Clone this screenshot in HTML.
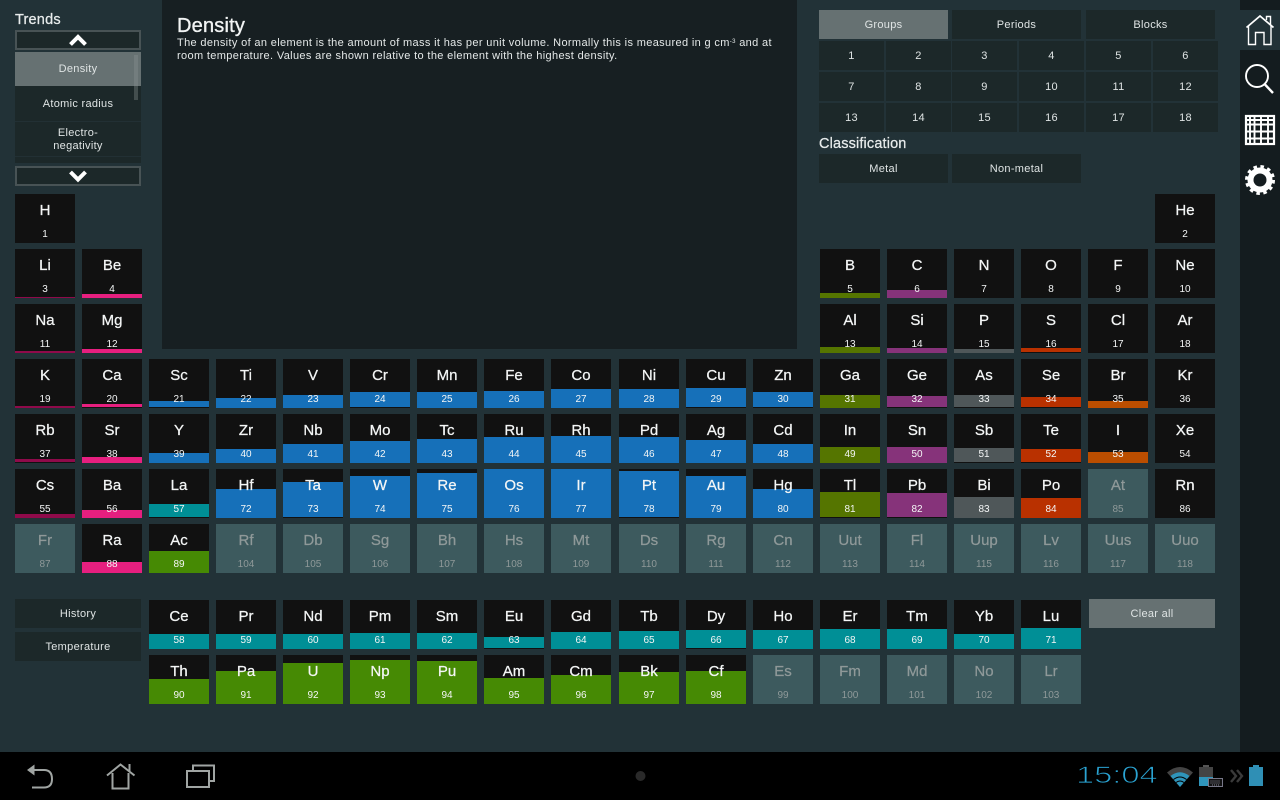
<!DOCTYPE html>
<html><head><meta charset="utf-8"><title>Periodic Table</title>
<style>
html,body{margin:0;padding:0;width:1280px;height:800px;overflow:hidden;background:#000}
#a{position:absolute;left:0;top:0;width:1280px;height:752px;background:#223237;font-family:"Liberation Sans",sans-serif;color:#e8ecec;overflow:hidden}
.c{position:absolute;width:60px;height:49px;background:#111;overflow:hidden;color:#f4f6f6}
.c i{position:absolute;left:0;right:0;bottom:0;display:block}
.c b{position:absolute;left:0;right:0;top:8px;text-align:center;font-weight:normal;font-size:15px;line-height:18px;-webkit-text-stroke:.25px currentColor}
.c u{position:absolute;left:0;right:0;top:35px;text-align:center;text-decoration:none;font-size:10px;line-height:12px}
.d{background:#3d5a5e;color:#8f9999}
.k{background:#8f0a4a}.e{background:#e61f7f}.t{background:#1670b9}.l{background:#008f96}.n{background:#468a04}.o{background:#557500}.p{background:#86337a}.g{background:#4f5759}.r{background:#b93100}.y{background:#bb4e00}
.btn{position:absolute;background:#1c2829;text-align:center;font-size:11px;line-height:30px;color:#dfe4e4;letter-spacing:.3px}
.sel{background:#667172}
.h{position:absolute;font-size:14.5px;line-height:18px;color:#e8ecec;-webkit-text-stroke:.25px currentColor}
svg{position:absolute;overflow:visible}
</style></head><body>
<div id="a">
<div style="position:absolute;left:162px;top:0;width:635px;height:349px;background:#171f22"></div>
<div class="h" style="left:177px;top:14px;font-size:20px;line-height:24px;color:#f2f4f4;letter-spacing:.2px;-webkit-text-stroke:.35px #f2f4f4">Density</div>
<div style="position:absolute;left:177px;top:36px;width:612px;font-size:11px;line-height:13px;color:#e4e8e8;letter-spacing:.35px">The density of an element is the amount of mass it has per unit volume. Normally this is measured in g cm<span style="font-size:6px;vertical-align:3px">-3</span> and at<br>room temperature. Values are shown relative to the element with the highest density.</div>

<div class="h" style="left:15px;top:11px;letter-spacing:.2px">Trends</div>
<div style="position:absolute;left:15px;top:30px;width:122px;height:16px;border:2px solid #485355;background:#1c2829"></div>
<div style="position:absolute;left:15px;top:52px;width:126px;height:111px;background:#1c2829"></div>
<div class="btn sel" style="left:15px;top:52px;width:126px;padding-top:1px;height:33px;line-height:33px">Density</div>
<div class="btn" style="left:15px;top:87px;width:126px;height:33px;padding-top:1px;line-height:33px;border-bottom:1px solid #223034">Atomic radius</div>
<div class="btn" style="left:15px;top:122px;width:126px;height:34px;line-height:13px;border-bottom:1px solid #223034"><div style="padding-top:5px">Electro-<br>negativity</div></div>
<div style="position:absolute;left:134px;top:55px;width:4px;height:45px;background:rgba(140,150,150,.35)"></div>
<div style="position:absolute;left:15px;top:166px;width:122px;height:16px;border:2px solid #485355;background:#1c2829"></div>
<svg style="left:0;top:0;z-index:3" width="1" height="1"><path d="M70.500 44.500L78 37L85.500 44.500" fill="none" stroke="#fff" stroke-width="4"/><path d="M70.500 172L78 179.500L85.500 172" fill="none" stroke="#fff" stroke-width="4"/></svg>

<div class="btn sel" style="left:819px;top:10px;width:129px;height:29px">Groups</div>
<div class="btn" style="left:952px;top:10px;width:129px;height:29px">Periods</div>
<div class="btn" style="left:1086px;top:10px;width:129px;height:29px">Blocks</div>
<div class="btn" style="left:819px;top:41px;width:65px;height:29px">1</div>
<div class="btn" style="left:886px;top:41px;width:65px;height:29px">2</div>
<div class="btn" style="left:952px;top:41px;width:65px;height:29px">3</div>
<div class="btn" style="left:1019px;top:41px;width:65px;height:29px">4</div>
<div class="btn" style="left:1086px;top:41px;width:65px;height:29px">5</div>
<div class="btn" style="left:1153px;top:41px;width:65px;height:29px">6</div>
<div class="btn" style="left:819px;top:72px;width:65px;height:29px">7</div>
<div class="btn" style="left:886px;top:72px;width:65px;height:29px">8</div>
<div class="btn" style="left:952px;top:72px;width:65px;height:29px">9</div>
<div class="btn" style="left:1019px;top:72px;width:65px;height:29px">10</div>
<div class="btn" style="left:1086px;top:72px;width:65px;height:29px">11</div>
<div class="btn" style="left:1153px;top:72px;width:65px;height:29px">12</div>
<div class="btn" style="left:819px;top:103px;width:65px;height:29px">13</div>
<div class="btn" style="left:886px;top:103px;width:65px;height:29px">14</div>
<div class="btn" style="left:952px;top:103px;width:65px;height:29px">15</div>
<div class="btn" style="left:1019px;top:103px;width:65px;height:29px">16</div>
<div class="btn" style="left:1086px;top:103px;width:65px;height:29px">17</div>
<div class="btn" style="left:1153px;top:103px;width:65px;height:29px">18</div>
<div class="h" style="left:819px;top:135px;letter-spacing:.15px">Classification</div>
<div class="btn" style="left:819px;top:154px;width:129px;height:29px">Metal</div>
<div class="btn" style="left:952px;top:154px;width:129px;height:29px">Non-metal</div>
<div class="btn" style="left:15px;top:599px;width:126px;height:29px">History</div>
<div class="btn" style="left:15px;top:632px;width:126px;height:29px">Temperature</div>
<div class="btn sel" style="left:1089px;top:599px;width:126px;height:29px">Clear all</div>

<div class="c" style="left:15px;top:194px"><b>H</b><u>1</u></div>
<div class="c" style="left:1155px;top:194px"><b>He</b><u>2</u></div>
<div class="c" style="left:15px;top:249px"><i class="k" style="height:1px"></i><b>Li</b><u>3</u></div>
<div class="c" style="left:82px;top:249px"><i class="e" style="height:4px"></i><b>Be</b><u>4</u></div>
<div class="c" style="left:820px;top:249px"><i class="o" style="height:5px"></i><b>B</b><u>5</u></div>
<div class="c" style="left:887px;top:249px"><i class="p" style="height:8px"></i><b>C</b><u>6</u></div>
<div class="c" style="left:954px;top:249px"><b>N</b><u>7</u></div>
<div class="c" style="left:1021px;top:249px"><b>O</b><u>8</u></div>
<div class="c" style="left:1088px;top:249px"><b>F</b><u>9</u></div>
<div class="c" style="left:1155px;top:249px"><b>Ne</b><u>10</u></div>
<div class="c" style="left:15px;top:304px"><i class="k" style="height:2px"></i><b>Na</b><u>11</u></div>
<div class="c" style="left:82px;top:304px"><i class="e" style="height:4px"></i><b>Mg</b><u>12</u></div>
<div class="c" style="left:820px;top:304px"><i class="o" style="height:6px"></i><b>Al</b><u>13</u></div>
<div class="c" style="left:887px;top:304px"><i class="p" style="height:5px"></i><b>Si</b><u>14</u></div>
<div class="c" style="left:954px;top:304px"><i class="g" style="height:4px"></i><b>P</b><u>15</u></div>
<div class="c" style="left:1021px;top:304px"><i class="r" style="height:4px;bottom:1px"></i><b>S</b><u>16</u></div>
<div class="c" style="left:1088px;top:304px"><b>Cl</b><u>17</u></div>
<div class="c" style="left:1155px;top:304px"><b>Ar</b><u>18</u></div>
<div class="c" style="left:15px;top:359px"><i class="k" style="height:2px"></i><b>K</b><u>19</u></div>
<div class="c" style="left:82px;top:359px"><i class="e" style="height:3px;bottom:1px"></i><b>Ca</b><u>20</u></div>
<div class="c" style="left:149px;top:359px"><i class="t" style="height:6px;bottom:1px"></i><b>Sc</b><u>21</u></div>
<div class="c" style="left:216px;top:359px"><i class="t" style="height:10px"></i><b>Ti</b><u>22</u></div>
<div class="c" style="left:283px;top:359px"><i class="t" style="height:13px"></i><b>V</b><u>23</u></div>
<div class="c" style="left:350px;top:359px"><i class="t" style="height:15px;bottom:1px"></i><b>Cr</b><u>24</u></div>
<div class="c" style="left:417px;top:359px"><i class="t" style="height:16px"></i><b>Mn</b><u>25</u></div>
<div class="c" style="left:484px;top:359px"><i class="t" style="height:17px"></i><b>Fe</b><u>26</u></div>
<div class="c" style="left:551px;top:359px"><i class="t" style="height:19px"></i><b>Co</b><u>27</u></div>
<div class="c" style="left:619px;top:359px"><i class="t" style="height:19px"></i><b>Ni</b><u>28</u></div>
<div class="c" style="left:686px;top:359px"><i class="t" style="height:19px;bottom:1px"></i><b>Cu</b><u>29</u></div>
<div class="c" style="left:753px;top:359px"><i class="t" style="height:15px;bottom:1px"></i><b>Zn</b><u>30</u></div>
<div class="c" style="left:820px;top:359px"><i class="o" style="height:13px"></i><b>Ga</b><u>31</u></div>
<div class="c" style="left:887px;top:359px"><i class="p" style="height:11px;bottom:1px"></i><b>Ge</b><u>32</u></div>
<div class="c" style="left:954px;top:359px"><i class="g" style="height:12px;bottom:1px"></i><b>As</b><u>33</u></div>
<div class="c" style="left:1021px;top:359px"><i class="r" style="height:10px;bottom:1px"></i><b>Se</b><u>34</u></div>
<div class="c" style="left:1088px;top:359px"><i class="y" style="height:7px"></i><b>Br</b><u>35</u></div>
<div class="c" style="left:1155px;top:359px"><b>Kr</b><u>36</u></div>
<div class="c" style="left:15px;top:414px"><i class="k" style="height:3px;bottom:1px"></i><b>Rb</b><u>37</u></div>
<div class="c" style="left:82px;top:414px"><i class="e" style="height:6px"></i><b>Sr</b><u>38</u></div>
<div class="c" style="left:149px;top:414px"><i class="t" style="height:10px"></i><b>Y</b><u>39</u></div>
<div class="c" style="left:216px;top:414px"><i class="t" style="height:14px"></i><b>Zr</b><u>40</u></div>
<div class="c" style="left:283px;top:414px"><i class="t" style="height:19px"></i><b>Nb</b><u>41</u></div>
<div class="c" style="left:350px;top:414px"><i class="t" style="height:22px"></i><b>Mo</b><u>42</u></div>
<div class="c" style="left:417px;top:414px"><i class="t" style="height:24px"></i><b>Tc</b><u>43</u></div>
<div class="c" style="left:484px;top:414px"><i class="t" style="height:26px"></i><b>Ru</b><u>44</u></div>
<div class="c" style="left:551px;top:414px"><i class="t" style="height:27px"></i><b>Rh</b><u>45</u></div>
<div class="c" style="left:619px;top:414px"><i class="t" style="height:26px"></i><b>Pd</b><u>46</u></div>
<div class="c" style="left:686px;top:414px"><i class="t" style="height:23px"></i><b>Ag</b><u>47</u></div>
<div class="c" style="left:753px;top:414px"><i class="t" style="height:19px"></i><b>Cd</b><u>48</u></div>
<div class="c" style="left:820px;top:414px"><i class="o" style="height:16px"></i><b>In</b><u>49</u></div>
<div class="c" style="left:887px;top:414px"><i class="p" style="height:16px"></i><b>Sn</b><u>50</u></div>
<div class="c" style="left:954px;top:414px"><i class="g" style="height:14px;bottom:1px"></i><b>Sb</b><u>51</u></div>
<div class="c" style="left:1021px;top:414px"><i class="r" style="height:13px;bottom:1px"></i><b>Te</b><u>52</u></div>
<div class="c" style="left:1088px;top:414px"><i class="y" style="height:11px"></i><b>I</b><u>53</u></div>
<div class="c" style="left:1155px;top:414px"><b>Xe</b><u>54</u></div>
<div class="c" style="left:15px;top:469px"><i class="k" style="height:4px"></i><b>Cs</b><u>55</u></div>
<div class="c" style="left:82px;top:469px"><i class="e" style="height:8px"></i><b>Ba</b><u>56</u></div>
<div class="c" style="left:149px;top:469px"><i class="l" style="height:13px;bottom:1px"></i><b>La</b><u>57</u></div>
<div class="c" style="left:216px;top:469px"><i class="t" style="height:29px"></i><b>Hf</b><u>72</u></div>
<div class="c" style="left:283px;top:469px"><i class="t" style="height:35px;bottom:1px"></i><b>Ta</b><u>73</u></div>
<div class="c" style="left:350px;top:469px"><i class="t" style="height:42px"></i><b>W</b><u>74</u></div>
<div class="c" style="left:417px;top:469px"><i class="t" style="height:45px"></i><b>Re</b><u>75</u></div>
<div class="c" style="left:484px;top:469px"><i class="t" style="height:49px"></i><b>Os</b><u>76</u></div>
<div class="c" style="left:551px;top:469px"><i class="t" style="height:49px"></i><b>Ir</b><u>77</u></div>
<div class="c" style="left:619px;top:469px"><i class="t" style="height:46px;bottom:1px"></i><b>Pt</b><u>78</u></div>
<div class="c" style="left:686px;top:469px"><i class="t" style="height:42px"></i><b>Au</b><u>79</u></div>
<div class="c" style="left:753px;top:469px"><i class="t" style="height:29px"></i><b>Hg</b><u>80</u></div>
<div class="c" style="left:820px;top:469px"><i class="o" style="height:25px;bottom:1px"></i><b>Tl</b><u>81</u></div>
<div class="c" style="left:887px;top:469px"><i class="p" style="height:24px;bottom:1px"></i><b>Pb</b><u>82</u></div>
<div class="c" style="left:954px;top:469px"><i class="g" style="height:21px"></i><b>Bi</b><u>83</u></div>
<div class="c" style="left:1021px;top:469px"><i class="r" style="height:20px"></i><b>Po</b><u>84</u></div>
<div class="c d" style="left:1088px;top:469px"><b>At</b><u>85</u></div>
<div class="c" style="left:1155px;top:469px"><b>Rn</b><u>86</u></div>
<div class="c d" style="left:15px;top:524px"><b>Fr</b><u>87</u></div>
<div class="c" style="left:82px;top:524px"><i class="e" style="height:11px"></i><b>Ra</b><u>88</u></div>
<div class="c" style="left:149px;top:524px"><i class="n" style="height:22px"></i><b>Ac</b><u>89</u></div>
<div class="c d" style="left:216px;top:524px"><b>Rf</b><u>104</u></div>
<div class="c d" style="left:283px;top:524px"><b>Db</b><u>105</u></div>
<div class="c d" style="left:350px;top:524px"><b>Sg</b><u>106</u></div>
<div class="c d" style="left:417px;top:524px"><b>Bh</b><u>107</u></div>
<div class="c d" style="left:484px;top:524px"><b>Hs</b><u>108</u></div>
<div class="c d" style="left:551px;top:524px"><b>Mt</b><u>109</u></div>
<div class="c d" style="left:619px;top:524px"><b>Ds</b><u>110</u></div>
<div class="c d" style="left:686px;top:524px"><b>Rg</b><u>111</u></div>
<div class="c d" style="left:753px;top:524px"><b>Cn</b><u>112</u></div>
<div class="c d" style="left:820px;top:524px"><b>Uut</b><u>113</u></div>
<div class="c d" style="left:887px;top:524px"><b>Fl</b><u>114</u></div>
<div class="c d" style="left:954px;top:524px"><b>Uup</b><u>115</u></div>
<div class="c d" style="left:1021px;top:524px"><b>Lv</b><u>116</u></div>
<div class="c d" style="left:1088px;top:524px"><b>Uus</b><u>117</u></div>
<div class="c d" style="left:1155px;top:524px"><b>Uuo</b><u>118</u></div>

<div class="c" style="left:149px;top:600px"><i class="l" style="height:15px"></i><b>Ce</b><u>58</u></div>
<div class="c" style="left:216px;top:600px"><i class="l" style="height:15px"></i><b>Pr</b><u>59</u></div>
<div class="c" style="left:283px;top:600px"><i class="l" style="height:15px"></i><b>Nd</b><u>60</u></div>
<div class="c" style="left:350px;top:600px"><i class="l" style="height:16px"></i><b>Pm</b><u>61</u></div>
<div class="c" style="left:417px;top:600px"><i class="l" style="height:16px"></i><b>Sm</b><u>62</u></div>
<div class="c" style="left:484px;top:600px"><i class="l" style="height:11px;bottom:1px"></i><b>Eu</b><u>63</u></div>
<div class="c" style="left:551px;top:600px"><i class="l" style="height:17px"></i><b>Gd</b><u>64</u></div>
<div class="c" style="left:619px;top:600px"><i class="l" style="height:18px"></i><b>Tb</b><u>65</u></div>
<div class="c" style="left:686px;top:600px"><i class="l" style="height:18px;bottom:1px"></i><b>Dy</b><u>66</u></div>
<div class="c" style="left:753px;top:600px"><i class="l" style="height:19px"></i><b>Ho</b><u>67</u></div>
<div class="c" style="left:820px;top:600px"><i class="l" style="height:20px"></i><b>Er</b><u>68</u></div>
<div class="c" style="left:887px;top:600px"><i class="l" style="height:20px"></i><b>Tm</b><u>69</u></div>
<div class="c" style="left:954px;top:600px"><i class="l" style="height:15px"></i><b>Yb</b><u>70</u></div>
<div class="c" style="left:1021px;top:600px"><i class="l" style="height:21px"></i><b>Lu</b><u>71</u></div>
<div class="c" style="left:149px;top:655px"><i class="n" style="height:25px"></i><b>Th</b><u>90</u></div>
<div class="c" style="left:216px;top:655px"><i class="n" style="height:33px"></i><b>Pa</b><u>91</u></div>
<div class="c" style="left:283px;top:655px"><i class="n" style="height:41px"></i><b>U</b><u>92</u></div>
<div class="c" style="left:350px;top:655px"><i class="n" style="height:44px"></i><b>Np</b><u>93</u></div>
<div class="c" style="left:417px;top:655px"><i class="n" style="height:43px"></i><b>Pu</b><u>94</u></div>
<div class="c" style="left:484px;top:655px"><i class="n" style="height:26px"></i><b>Am</b><u>95</u></div>
<div class="c" style="left:551px;top:655px"><i class="n" style="height:29px"></i><b>Cm</b><u>96</u></div>
<div class="c" style="left:619px;top:655px"><i class="n" style="height:32px"></i><b>Bk</b><u>97</u></div>
<div class="c" style="left:686px;top:655px"><i class="n" style="height:33px"></i><b>Cf</b><u>98</u></div>
<div class="c d" style="left:753px;top:655px"><b>Es</b><u>99</u></div>
<div class="c d" style="left:820px;top:655px"><b>Fm</b><u>100</u></div>
<div class="c d" style="left:887px;top:655px"><b>Md</b><u>101</u></div>
<div class="c d" style="left:954px;top:655px"><b>No</b><u>102</u></div>
<div class="c d" style="left:1021px;top:655px"><b>Lr</b><u>103</u></div>

<div style="position:absolute;left:1240px;top:0;width:40px;height:752px;background:#141c1f"></div>
<div style="position:absolute;left:1240px;top:10px;width:40px;height:40px;background:#223237"></div>
<svg style="left:0;top:0" width="1" height="1" fill="none" stroke="#fff">
<path d="M1246.500 27.500L1260 16L1273.500 27.500" stroke-width="1.800"/>
<path d="M1248.500 26V44.500H1255.500V32.500H1264V44.500H1271V26" stroke-width="1.400"/>
<path d="M1266.500 20V16.500H1270.500V25" stroke-width="1.400"/>
<circle cx="1257" cy="76" r="11" stroke-width="1.900"/>
<path d="M1264.500 84L1273 93" stroke-width="2.400"/>
<rect x="1246" y="116" width="28" height="28" stroke-width="2.200"/>
<path d="M1246 120H1274M1246 124.500H1274M1246 131.500H1274M1246 138.500H1274M1250 116V144M1254.500 116V144M1261 116V144M1268 116V144" stroke-width="1.900"/>
</svg>
<svg style="left:1245px;top:165px" width="30" height="30" viewBox="0 0 30 30">
<circle cx="15" cy="15" r="12.500" fill="#fff"/>
<circle cx="15" cy="15" r="13" fill="none" stroke="#fff" stroke-width="4" stroke-dasharray="3.400 3.410"/>
<circle cx="15" cy="15" r="6.500" fill="#141c1f"/>
</svg>
</div>

<svg style="left:0;top:0" width="1" height="1" fill="none" stroke="#a0a5a3" stroke-width="2">
<path d="M27 770L34.500 764.500V775.500Z" fill="#a0a5a3" stroke="none"/>
<path d="M34 770H44Q52 770 52 779Q52 787.500 44 787.500H32"/>
<path d="M107 775.500L120.500 764.500L134.500 775.500"/>
<path d="M112.500 773V788.500H128.500V773M129.500 764V771"/>
<rect x="187" y="771" width="22" height="16"/>
<path d="M193 770V765.500H214V781H210"/>
<circle cx="640.500" cy="776" r="5" fill="#2a2a2a" stroke="none"/>
</svg>

<div style="position:absolute;left:1076px;top:761px;font:24px/30px 'Liberation Sans',sans-serif;color:#2aa3d2;-webkit-text-stroke:.8px #000;transform-origin:0 50%;transform:scaleX(1.36)">15:04</div>

<svg style="left:0;top:0" width="1" height="1">
<path d="M1180 787L1167 772.500Q1180 761.500 1193 772.500Z" fill="#444"/>
<path d="M1180 787L1170.500 776Q1180 768.500 1189.500 776Z" fill="#2f95bb"/>
<path d="M1173.500 779.500Q1180 774.500 1186.500 779.500M1176 782.500Q1180 779.500 1184 782.500" fill="none" stroke="#000" stroke-width="1"/>
<rect x="1203" y="765" width="6" height="2" fill="#555"/>
<rect x="1199" y="767" width="14" height="10" fill="#444"/>
<rect x="1199" y="777" width="14" height="9" fill="#2f95bb"/>
<rect x="1208.500" y="778.500" width="14" height="8" fill="#111" stroke="#778" stroke-width="1"/>
<path d="M1210.500 781H1220.500M1210.500 783H1220.500M1212 785H1219" stroke="#889" stroke-width="1" stroke-dasharray="1 1"/>
<path d="M1231 770L1236 776L1231 782M1237 770L1242 776L1237 782" fill="none" stroke="#3a3a3a" stroke-width="2.400"/>
<rect x="1253" y="765" width="6" height="2" fill="#2f8fb5"/>
<rect x="1249" y="767" width="14" height="19" fill="#2f8fb5"/>
</svg>
</body></html>
